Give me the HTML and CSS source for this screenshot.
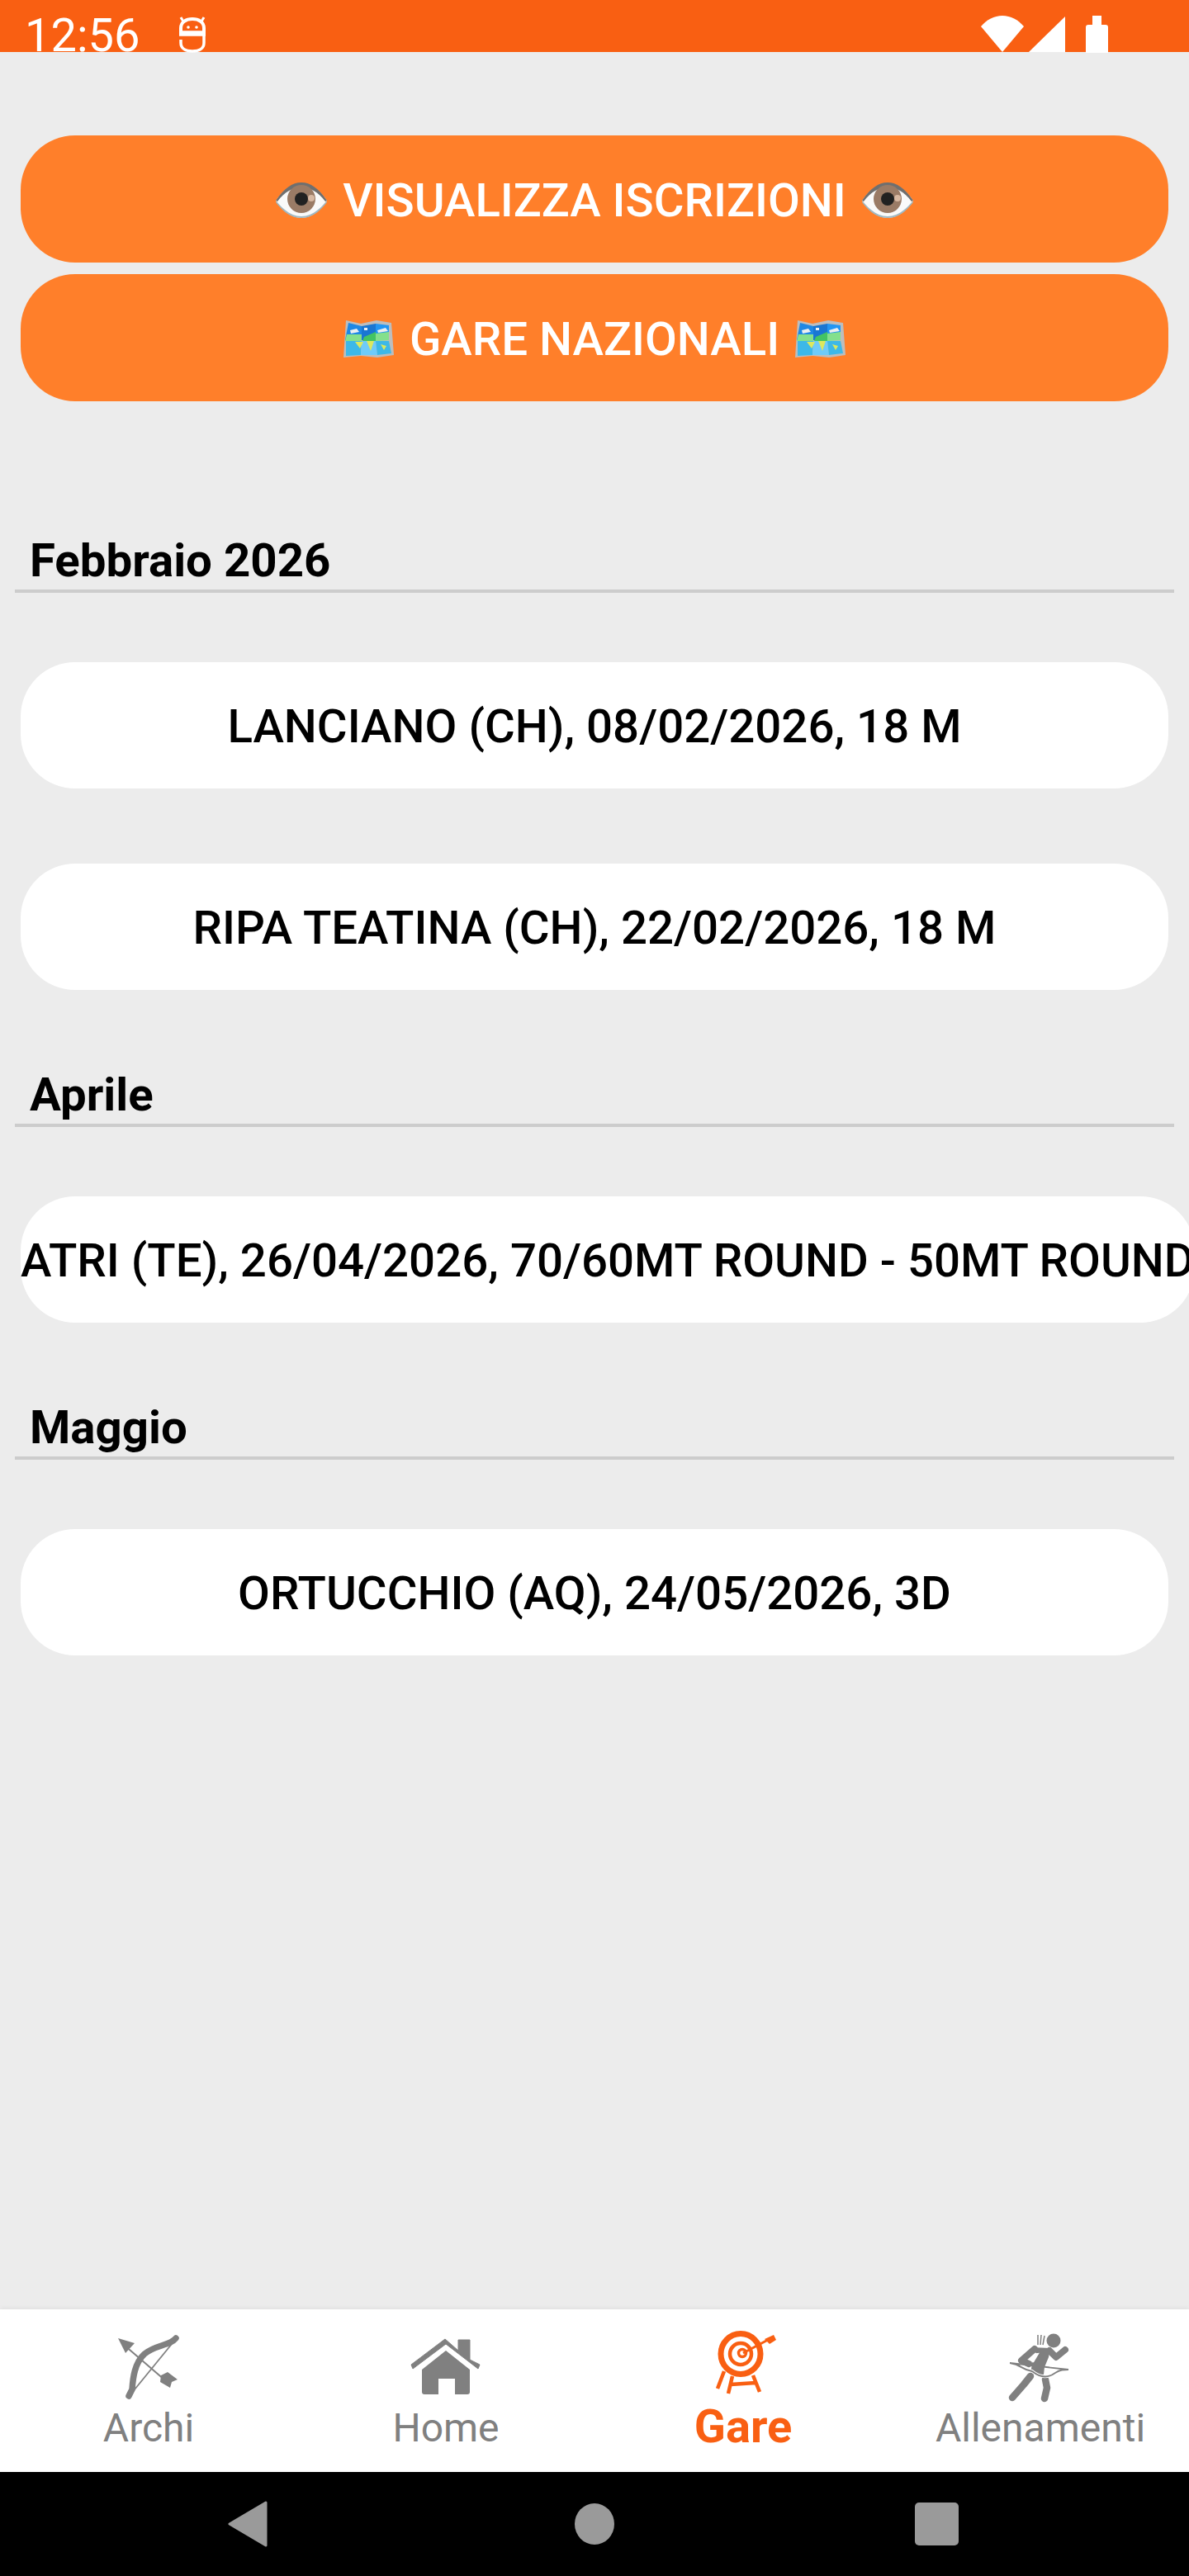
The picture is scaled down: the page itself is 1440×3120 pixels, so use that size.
FILE: index.html
```html
<!DOCTYPE html>
<html>
<head>
  <meta charset="UTF-8">
  <title>Gare</title>
  <link rel="stylesheet" href="styles.css">
</head>
<body>
  <svg class="defs" width="0" height="0">
    <symbol id="eye" viewBox="0 0 62 43">
      <path d="M0 22C10 8 20 1 31 1s21 7 31 21C52 36 42 43 31 43S10 36 0 22z" fill="#fafafa"/>
      <path d="M1 23C10 34 20 41 31 41s21-7 30-18l1 1C52 37 42 43 31 43S10 37 0 24z" fill="#9fb9c4"/>
      <path d="M0 22C10 7 20 0 31 0s21 7 31 22l-2 1C51 11 41 6 31 6S11 11 2 23z" fill="#6f6f6f"/>
      <circle cx="31" cy="20" r="17" fill="#9a7b66"/>
      <circle cx="31" cy="20" r="8" fill="#212121"/>
      <circle cx="43" cy="19" r="4" fill="#d7b8a2"/>
    </symbol>
    <symbol id="map" viewBox="0 0 61 47">
      <path d="M3 1l18 4 19-4 18 3 3 39-20 3-20-2-21 2z" fill="#bdbdbd"/>
      <path d="M6 4l16 4 0 17-20 0z" fill="#1e88e5"/>
      <path d="M22 8l17-3 0 20-17 0z" fill="#1976d2"/>
      <path d="M39 5l16 2 0 18-16 0z" fill="#2196f3"/>
      <path d="M4 18l18 0 0 8-20 0zM39 17l16-2 0 10-16 1z" fill="#84e08c"/>
      <path d="M25 21l14-6 0 11-16 0z" fill="#43c463"/>
      <path d="M3 26l19 0 -1 17-18 1z" fill="#3db8e8"/>
      <path d="M22 26l17 0 2 17-20 0z" fill="#6ecbfa"/>
      <path d="M39 26l16 0 3 15-17 2z" fill="#3db8e8"/>
      <path d="M14 27l10 0-4 8zM28 26l9 0-4 12zM45 30l7 2-3 5z" fill="#dce85f"/>
      <path d="M8 13l8-2 3 4-10 2zM41 13l10-3 3 4-12 2zM25 10l4 0 0 3-4 0z" fill="#eceff1"/>
    </symbol>
  </svg>

  <div class="status-bar">
    <span class="status-time">12:56</span>
    <svg class="status-app" viewBox="0 0 32 44">
      <path d="M2 1l3 5M30 1l-3 5" stroke="#fff" stroke-width="3"/>
      <path d="M2 20V14C2 7 8 3 16 3s14 4 14 11v6" fill="none" stroke="#fff" stroke-width="4"/>
      <path d="M0 19h32v3H0zM2 28V32c0 7 6 10 14 10s14-3 14-10V22" fill="none" stroke="#fff" stroke-width="3.5"/>
      <circle cx="11" cy="13" r="1.8" fill="#fff"/><circle cx="21" cy="13" r="1.8" fill="#fff"/>
    </svg>
    <div class="status-right">
      <svg class="status-wifi" viewBox="0 0 52 44"><path d="M26 44L0 13C7 5 16 0 26 0s19 5 26 13z" fill="#fff"/></svg>
      <svg class="status-signal" viewBox="0 0 44 43"><path d="M44 0v43H0z" fill="#fff"/></svg>
      <svg class="status-battery" viewBox="0 0 27 45"><path d="M8 0h11v11h5c2 0 3 1 3 3v31H0V14c0-2 1-3 3-3h5z" fill="#fff"/></svg>
    </div>
  </div>

  <main class="content">
    <a class="action-btn"><svg class="emoji-eye"><use href="#eye"/></svg><span>VISUALIZZA ISCRIZIONI</span><svg class="emoji-eye"><use href="#eye"/></svg></a>
    <a class="action-btn"><svg class="emoji-map"><use href="#map"/></svg><span>GARE NAZIONALI</span><svg class="emoji-map"><use href="#map"/></svg></a>

    <section class="month month-first">
      <h2 class="month-title">Febbraio 2026</h2>
      <a class="race">LANCIANO (CH), 08/02/2026, 18 M</a>
      <a class="race">RIPA TEATINA (CH), 22/02/2026, 18 M</a>
    </section>
    <section class="month">
      <h2 class="month-title">Aprile</h2>
      <a class="race">ATRI (TE), 26/04/2026, 70/60MT ROUND - 50MT ROUND</a>
    </section>
    <section class="month">
      <h2 class="month-title">Maggio</h2>
      <a class="race">ORTUCCHIO (AQ), 24/05/2026, 3D</a>
    </section>
  </main>

  <nav class="tabs">
    <a class="tab">
      <svg class="tab-icon" viewBox="15 0 130 100">
        <path d="M113 12C106 21 88 20 75 31C63 42 61 60 60 74L56 82" fill="none" stroke="#808080" stroke-width="7.5" stroke-linecap="round"/>
        <path d="M108 19L59 79" stroke="#808080" stroke-width="1.8"/>
        <path d="M50 20L100 63" stroke="#808080" stroke-width="2"/>
        <path d="M43 12L63 18 52 30z" fill="#808080"/>
        <path d="M95 57L103 53 115 62 108 65 106 72 94 65z" fill="#808080"/>
      </svg>
      <span>Archi</span>
    </a>
    <a class="tab">
      <svg class="tab-icon" viewBox="0 0 130 100">
        <path d="M23 44L64 13 80 27V14H94V38L106 44 104 49 65 19 25 49z" fill="#808080" stroke="#808080" stroke-linejoin="round"/>
        <path d="M65 27L94 50V77c0 2-1 3-3 3H76V61H56V80H39c-2 0-3-1-3-3V50z" fill="#808080"/>
      </svg>
      <span>Home</span>
    </a>
    <a class="tab tab-active">
      <svg class="tab-icon" viewBox="-5 0 130 100">
        <g fill="none" stroke="#f95f12">
          <ellipse cx="57" cy="31" rx="24" ry="24.5" stroke-width="7"/>
          <circle cx="57" cy="31" r="13" stroke-width="4.5"/>
          <circle cx="59" cy="30" r="4.5" stroke-width="3.5"/>
          <path d="M60 30L90 14" stroke-width="3"/>
          <path d="M37 52L29 73M47 58L42 79M72 57L80 77M45 68L75 66" stroke-width="4.5"/>
        </g>
        <path d="M86 13L97 8 100 14 92 19z" fill="#f95f12"/>
      </svg>
      <span>Gare</span>
    </a>
    <a class="tab">
      <svg class="tab-icon" viewBox="-5 0 130 100">
        <circle cx="76" cy="15" r="8.5" fill="#808080"/>
        <path d="M57 20L57 8M60 20L61 8M63 20L65 9" stroke="#808080" stroke-width="1.5"/>
        <path d="M50 23L72 24 70 35 65 47 64 56 48 56 50 42 56 32z" fill="#808080"/>
        <path d="M47 32L57 31 51 41" fill="none" stroke="#fff" stroke-width="2"/>
        <path d="M53 25L37 39 46 43M71 27L79 35 90 26" fill="none" stroke="#808080" stroke-width="8" stroke-linecap="round" stroke-linejoin="round"/>
        <path d="M48 58L40 68 26 84M66 62L68 72 65 85" fill="none" stroke="#808080" stroke-width="8.5" stroke-linecap="round" stroke-linejoin="round"/>
        <path d="M23 42C38 44 36 50 50 52C60 60 70 60 78 54C84 50 88 50 94 50" fill="none" stroke="#fff" stroke-width="4"/>
        <path d="M23 42C38 44 36 50 50 52C60 60 70 60 78 54C84 50 88 50 94 50M23 42L94 50" fill="none" stroke="#808080" stroke-width="1.8"/>
      </svg>
      <span>Allenamenti</span>
    </a>
  </nav>

  <div class="system-nav">
    <svg class="sys-back" viewBox="0 0 50 56"><path d="M47 2L3 28 47 54z" fill="#9a9a9a" stroke="#9a9a9a" stroke-width="3" stroke-linejoin="round"/></svg>
    <div class="sys-home"></div>
    <div class="sys-recent"></div>
  </div>
</body>
</html>
```

FILE: styles.css
```css
body {
  margin: 0;
  width: 1440px;
  height: 3120px;
  display: flex;
  flex-direction: column;
  overflow: hidden;
  background: #ececec;
  font-family: Roboto, "Liberation Sans", sans-serif;
}
.defs {
  position: absolute;
}

/* status bar */
.status-bar {
  height: 63px;
  flex: none;
  display: flex;
  align-items: flex-start;
  background: #f95f12;
  color: #fff;
}
.status-time {
  margin: 12px 0 0 30px;
  font-size: 56px;
  line-height: 62px;
}
.status-app {
  width: 32px;
  height: 44px;
  margin: 20px 0 0 48px;
}
.status-right {
  margin-left: auto;
  margin-right: 98px;
  display: flex;
}
.status-wifi {
  width: 52px;
  height: 44px;
  margin-top: 19px;
}
.status-signal {
  width: 44px;
  height: 43px;
  margin: 20px 0 0 6px;
}
.status-battery {
  width: 27px;
  height: 45px;
  margin: 19px 0 0 25px;
}

/* page */
.content {
  flex: 1;
  min-height: 0;
  padding-top: 101px;
  display: flex;
  flex-direction: column;
}
.action-btn {
  box-sizing: border-box;
  height: 154px;
  margin: 0 25px 14px;
  padding-top: 3px;
  display: flex;
  align-items: center;
  justify-content: center;
  gap: 19px;
  border-radius: 66px;
  background: #ff7f2a;
  color: #fff;
  font-size: 56.4px;
  font-weight: 500;
}
.emoji-eye {
  width: 62px;
  height: 43px;
}
.emoji-map {
  width: 61px;
  height: 47px;
}
.month {
  margin-top: 101px;
}
.month-first {
  margin-top: 153px;
}
.month-title {
  margin: 0 18px;
  padding-left: 18px;
  height: 61px;
  line-height: 52px;
  border-bottom: 4px solid #ccc;
  font-size: 56.4px;
  font-weight: 700;
  color: #000;
}
.race {
  box-sizing: border-box;
  width: max-content;
  min-width: 1390px;
  height: 153px;
  margin: 84px 0 0 25px;
  padding-top: 3px;
  display: flex;
  align-items: center;
  justify-content: center;
  border-radius: 66px;
  background: #fff;
  color: #000;
  font-size: 56.4px;
  font-weight: 500;
  white-space: nowrap;
}
.race + .race {
  margin-top: 91px;
}

/* bottom tabs */
.tabs {
  flex: none;
  height: 197px;
  display: flex;
  background: #fff;
  box-shadow: 0 -3px 4px rgba(0,0,0,0.03);
}
.tab {
  flex: 1;
  display: flex;
  flex-direction: column;
  align-items: center;
  color: #808080;
  font-size: 48px;
  line-height: 42px;
}
.tab-icon {
  width: 130px;
  height: 100px;
  margin: 23px 0 0;
}
.tab-active {
  color: #f95f12;
  font-weight: 700;
  font-size: 56px;
  line-height: 38px;
}

/* android buttons */
.system-nav {
  flex: none;
  height: 126px;
  position: relative;
  background: #000;
}
.sys-back,
.sys-home,
.sys-recent {
  position: absolute;
}
.sys-back {
  left: 275px;
  top: 35px;
  width: 50px;
  height: 56px;
}
.sys-home {
  left: 696px;
  top: 38px;
  width: 48px;
  height: 50px;
  border-radius: 50%;
  background: #9a9a9a;
}
.sys-recent {
  left: 1108px;
  top: 37px;
  width: 53px;
  height: 52px;
  border-radius: 5px;
  background: #9a9a9a;
}
```
